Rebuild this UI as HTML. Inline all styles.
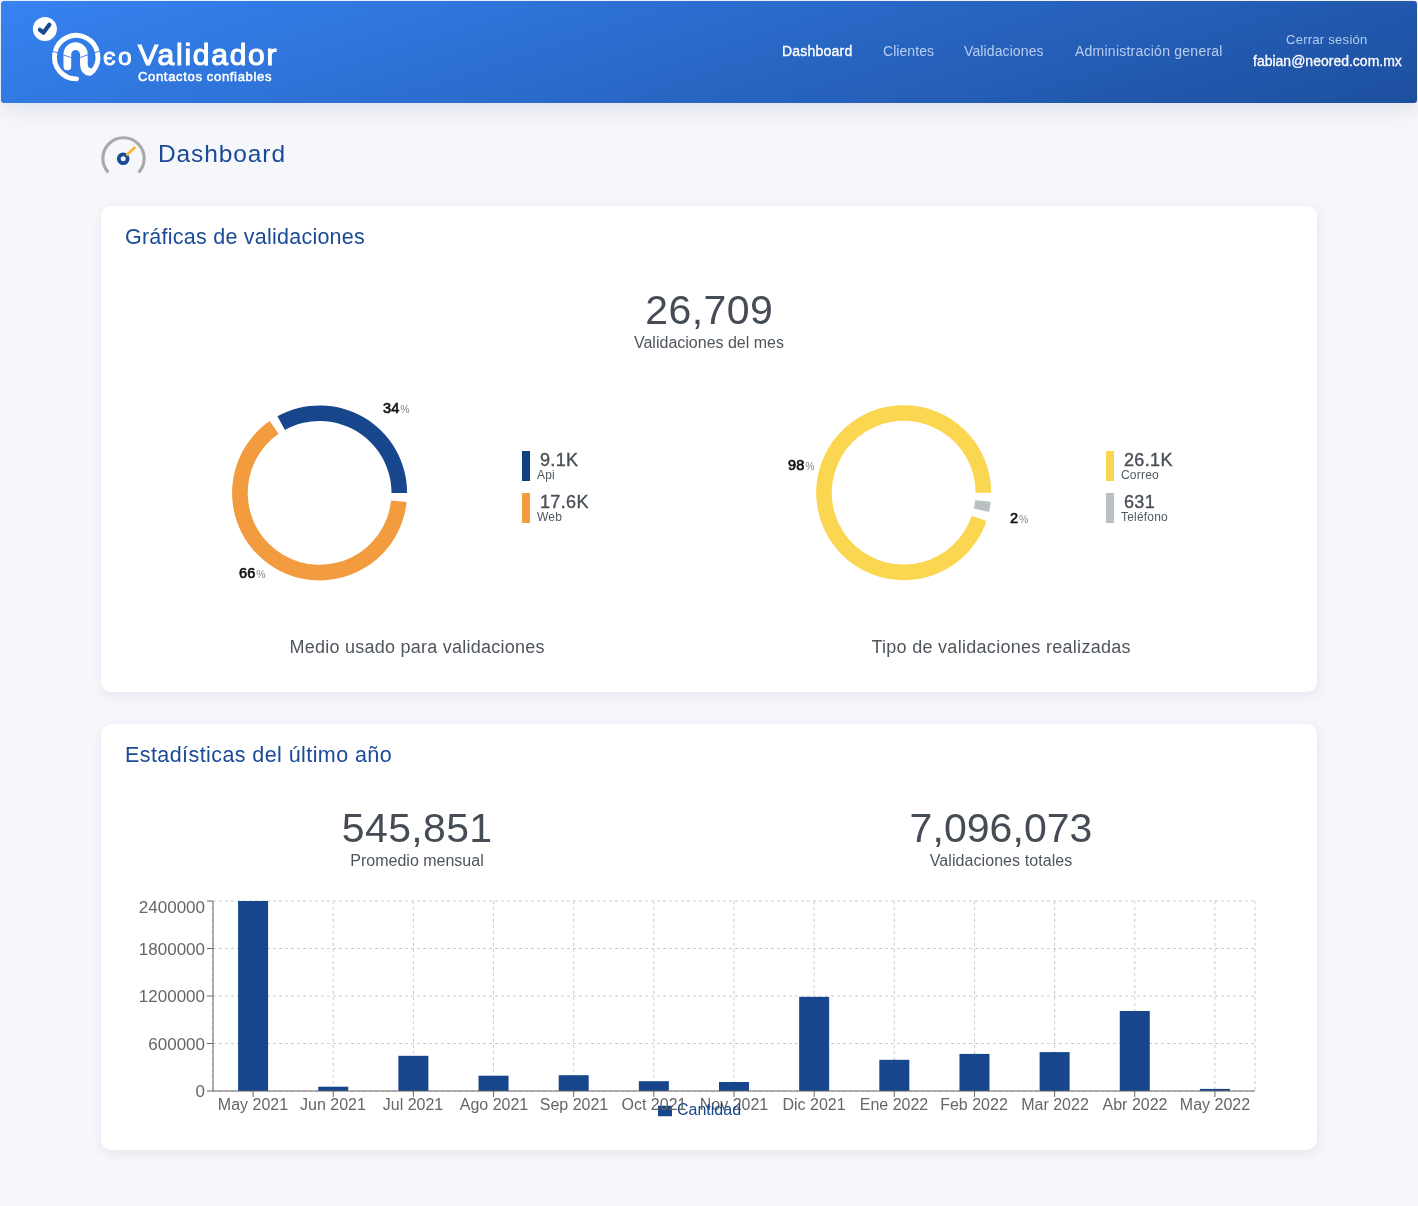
<!DOCTYPE html>
<html><head><meta charset="utf-8">
<style>
*{margin:0;padding:0;box-sizing:border-box}
html,body{width:1418px;height:1206px;overflow:hidden;background:#f6f7fb;font-family:"Liberation Sans",sans-serif;position:relative}
.t{position:absolute;white-space:nowrap;will-change:transform}
.hdr{position:absolute;left:1px;top:1px;width:1416px;height:102px;border-radius:3px;background:linear-gradient(162deg,#3683f2 0%,#1d4f9e 100%);box-shadow:0 5px 22px rgba(30,40,80,0.11)}
.card{position:absolute;left:101px;width:1216px;background:#fff;border-radius:10px;box-shadow:1px 3px 12px rgba(40,50,90,0.09)}
svg{position:absolute;left:0;top:0}
</style></head><body>
<div class="hdr"></div>
<div class="card" style="top:206px;height:486px"></div>
<div class="card" style="top:724px;height:426px"></div>
<svg width="1418" height="1206" viewBox="0 0 1418 1206">
<circle cx="44.9" cy="28.9" r="12" fill="#fff"/>
<path d="M39.9,29.8 L43.5,32.6 L49.3,24.7" fill="none" stroke="#1a4a8a" stroke-width="4.2" stroke-linecap="round" stroke-linejoin="round"/>
<path d="M76.58,78.85 A21.75,21.75 0 1 1 92.86,71.08" fill="none" stroke="#fff" stroke-width="4.9" stroke-linecap="round"/>
<path d="M67.35,66.5 L67.35,54.3 A8.25,8.25 0 0 1 83.85,54.3 L83.85,64 Q84.2,71.3 89.5,71.8" fill="none" stroke="#fff" stroke-width="7.7" stroke-linecap="round" stroke-linejoin="round"/>
<line x1="51.5" y1="51.2" x2="58.3" y2="52.9" stroke="#3279e6" stroke-width="0.9"/>
<line x1="63.3" y1="54.9" x2="71.5" y2="57.8" stroke="#3279e6" stroke-width="0.9"/>
<line x1="79.9" y1="57.5" x2="88.1" y2="54.8" stroke="#3279e6" stroke-width="0.9"/>
<line x1="93.8" y1="52.9" x2="100.6" y2="50.9" stroke="#3279e6" stroke-width="0.9"/>
<path d="M108.40,172.48 A20.65,20.65 0 1 1 138.60,172.48" fill="none" stroke="#a9a9a9" stroke-width="3.1"/>
<circle cx="123.2" cy="158.7" r="4.4" fill="none" stroke="#1a4a96" stroke-width="3.8"/>
<line x1="127.4" y1="154.6" x2="134.4" y2="147.8" stroke="#f5b73a" stroke-width="2.8" stroke-linecap="round"/>
<path d="M407.10,492.90 A87.5,87.5 0 0 0 277.44,416.23 L284.95,429.90 A71.9,71.9 0 0 1 391.50,492.90 Z" fill="#17468c"/>
<path d="M269.65,421.06 A87.5,87.5 0 1 0 406.62,502.05 L391.11,500.42 A71.9,71.9 0 1 1 278.56,433.86 Z" fill="#f29b3f"/>
<path d="M991.20,492.70 A87.5,87.5 0 1 0 986.54,520.88 L971.77,515.85 A71.9,71.9 0 1 1 975.60,492.70 Z" fill="#fbd651"/>
<path d="M989.03,512.06 A87.5,87.5 0 0 0 990.72,501.85 L975.21,500.22 A71.9,71.9 0 0 1 973.82,508.61 Z" fill="#b9c0c2"/>
<g stroke="#cccccc" stroke-width="1" stroke-dasharray="3 3"><line x1="213" y1="1091.00" x2="1255" y2="1091.00"/><line x1="213" y1="1043.50" x2="1255" y2="1043.50"/><line x1="213" y1="996.00" x2="1255" y2="996.00"/><line x1="213" y1="948.50" x2="1255" y2="948.50"/><line x1="213" y1="901.00" x2="1255" y2="901.00"/><line x1="253.08" y1="901" x2="253.08" y2="1091"/><line x1="333.23" y1="901" x2="333.23" y2="1091"/><line x1="413.38" y1="901" x2="413.38" y2="1091"/><line x1="493.54" y1="901" x2="493.54" y2="1091"/><line x1="573.69" y1="901" x2="573.69" y2="1091"/><line x1="653.85" y1="901" x2="653.85" y2="1091"/><line x1="734.00" y1="901" x2="734.00" y2="1091"/><line x1="814.15" y1="901" x2="814.15" y2="1091"/><line x1="894.31" y1="901" x2="894.31" y2="1091"/><line x1="974.46" y1="901" x2="974.46" y2="1091"/><line x1="1054.62" y1="901" x2="1054.62" y2="1091"/><line x1="1134.77" y1="901" x2="1134.77" y2="1091"/><line x1="1214.92" y1="901" x2="1214.92" y2="1091"/><line x1="213.00" y1="901" x2="213.00" y2="1091"/><line x1="1255.00" y1="901" x2="1255.00" y2="1091"/></g>
<rect x="238.08" y="901.00" width="30" height="190.00" fill="#17468c"/>
<rect x="318.23" y="1086.70" width="30" height="4.30" fill="#17468c"/>
<rect x="398.38" y="1055.80" width="30" height="35.20" fill="#17468c"/>
<rect x="478.54" y="1075.70" width="30" height="15.30" fill="#17468c"/>
<rect x="558.69" y="1075.20" width="30" height="15.80" fill="#17468c"/>
<rect x="638.85" y="1081.20" width="30" height="9.80" fill="#17468c"/>
<rect x="719.00" y="1082.00" width="30" height="9.00" fill="#17468c"/>
<rect x="799.15" y="996.85" width="30" height="94.15" fill="#17468c"/>
<rect x="879.31" y="1059.80" width="30" height="31.20" fill="#17468c"/>
<rect x="959.46" y="1053.90" width="30" height="37.10" fill="#17468c"/>
<rect x="1039.62" y="1052.10" width="30" height="38.90" fill="#17468c"/>
<rect x="1119.77" y="1011.00" width="30" height="80.00" fill="#17468c"/>
<rect x="1199.92" y="1088.90" width="30" height="2.10" fill="#17468c"/>
<g stroke="#666" stroke-width="1" fill="none"><line x1="213" y1="901" x2="213" y2="1091"/><line x1="213" y1="1091" x2="1255" y2="1091"/>
<line x1="207" y1="1091.00" x2="213" y2="1091.00"/>
<line x1="207" y1="1043.50" x2="213" y2="1043.50"/>
<line x1="207" y1="996.00" x2="213" y2="996.00"/>
<line x1="207" y1="948.50" x2="213" y2="948.50"/>
<line x1="207" y1="901.00" x2="213" y2="901.00"/>
<line x1="253.08" y1="1091" x2="253.08" y2="1097"/>
<line x1="333.23" y1="1091" x2="333.23" y2="1097"/>
<line x1="413.38" y1="1091" x2="413.38" y2="1097"/>
<line x1="493.54" y1="1091" x2="493.54" y2="1097"/>
<line x1="573.69" y1="1091" x2="573.69" y2="1097"/>
<line x1="653.85" y1="1091" x2="653.85" y2="1097"/>
<line x1="734.00" y1="1091" x2="734.00" y2="1097"/>
<line x1="814.15" y1="1091" x2="814.15" y2="1097"/>
<line x1="894.31" y1="1091" x2="894.31" y2="1097"/>
<line x1="974.46" y1="1091" x2="974.46" y2="1097"/>
<line x1="1054.62" y1="1091" x2="1054.62" y2="1097"/>
<line x1="1134.77" y1="1091" x2="1134.77" y2="1097"/>
<line x1="1214.92" y1="1091" x2="1214.92" y2="1097"/>
</g>
<rect x="658" y="1105.75" width="14" height="10.5" fill="#17468c"/>
</svg>
<div class="t" style="top:44.15px;font-size:14px;line-height:14px;color:#ffffff;letter-spacing:0.220px;left:781.70px;-webkit-text-stroke:0.35px #fff;">Dashboard</div>
<div class="t" style="top:44.15px;font-size:14px;line-height:14px;color:#b9cdf0;letter-spacing:0.060px;left:882.70px;">Clientes</div>
<div class="t" style="top:44.15px;font-size:14px;line-height:14px;color:#b9cdf0;letter-spacing:0.110px;left:964.20px;">Validaciones</div>
<div class="t" style="top:44.15px;font-size:14px;line-height:14px;color:#b9cdf0;letter-spacing:0.240px;left:1074.80px;">Administración general</div>
<div class="t" style="top:33.29px;font-size:13px;line-height:13px;color:#b9cdf0;letter-spacing:0.270px;left:1286.40px;">Cerrar sesión</div>
<div class="t" style="top:54.15px;font-size:14px;line-height:14px;color:#ffffff;left:1252.60px;-webkit-text-stroke:0.3px #fff;">fabian@neored.com.mx</div>
<div class="t" style="top:40.20px;font-size:30px;line-height:30px;color:#ffffff;letter-spacing:1.750px;left:138.20px;-webkit-text-stroke:1.1px #fff;">Validador</div>
<div class="t" style="top:70.09px;font-size:13px;line-height:13px;color:#ffffff;letter-spacing:0.670px;left:138.30px;-webkit-text-stroke:0.5px #fff;">Contactos confiables</div>
<div class="t" style="top:142.36px;font-size:24.5px;line-height:24.5px;color:#1a4a96;letter-spacing:0.900px;left:157.80px;">Dashboard</div>
<div class="t" style="top:226.90px;font-size:21.5px;line-height:21.5px;color:#1a4a96;letter-spacing:0.240px;left:125.40px;">Gráficas de validaciones</div>
<div class="t" style="top:745.00px;font-size:21.5px;line-height:21.5px;color:#1a4a96;letter-spacing:0.420px;left:124.70px;">Estadísticas del último año</div>
<div class="t" style="top:290.39px;font-size:41px;line-height:41px;color:#454c55;letter-spacing:0.400px;left:409.40px;width:600px;text-align:center;text-indent:0.400px;">26,709</div>
<div class="t" style="top:334.55px;font-size:16px;line-height:16px;color:#4e555d;left:409.00px;width:600px;text-align:center;">Validaciones del mes</div>
<div class="t" style="top:808.19px;font-size:41px;line-height:41px;color:#454c55;letter-spacing:0.350px;left:117.00px;width:600px;text-align:center;text-indent:0.350px;">545,851</div>
<div class="t" style="top:852.75px;font-size:16px;line-height:16px;color:#4e555d;left:117.30px;width:600px;text-align:center;">Promedio mensual</div>
<div class="t" style="top:807.89px;font-size:41px;line-height:41px;color:#454c55;letter-spacing:0.050px;left:700.90px;width:600px;text-align:center;text-indent:0.050px;">7,096,073</div>
<div class="t" style="top:852.55px;font-size:16px;line-height:16px;color:#4e555d;letter-spacing:0.070px;left:700.80px;width:600px;text-align:center;text-indent:0.070px;">Validaciones totales</div>
<div class="t" style="top:638.36px;font-size:18px;line-height:18px;color:#4e555d;letter-spacing:0.250px;left:117.00px;width:600px;text-align:center;text-indent:0.250px;">Medio usado para validaciones</div>
<div class="t" style="top:638.36px;font-size:18px;line-height:18px;color:#4e555d;letter-spacing:0.290px;left:700.50px;width:600px;text-align:center;text-indent:0.290px;">Tipo de validaciones realizadas</div>
<div class="t" style="left:382.70px;top:401.02px;font-size:14.5px;line-height:14.5px;color:#111;-webkit-text-stroke:0.65px #111;letter-spacing:0.3px">34<span style="font-size:10.5px;margin-left:0.5px;-webkit-text-stroke:0;letter-spacing:0;position:relative;top:-0.5px;font-weight:normal;color:#888;">%</span></div>
<div class="t" style="left:238.70px;top:565.92px;font-size:14.5px;line-height:14.5px;color:#111;-webkit-text-stroke:0.65px #111;letter-spacing:0.3px">66<span style="font-size:10.5px;margin-left:0.5px;-webkit-text-stroke:0;letter-spacing:0;position:relative;top:-0.5px;font-weight:normal;color:#888;">%</span></div>
<div class="t" style="left:787.60px;top:457.82px;font-size:14.5px;line-height:14.5px;color:#111;-webkit-text-stroke:0.65px #111;letter-spacing:0.3px">98<span style="font-size:10.5px;margin-left:0.5px;-webkit-text-stroke:0;letter-spacing:0;position:relative;top:-0.5px;font-weight:normal;color:#888;">%</span></div>
<div class="t" style="left:1009.50px;top:510.52px;font-size:14.5px;line-height:14.5px;color:#111;-webkit-text-stroke:0.65px #111;letter-spacing:0.3px">2<span style="font-size:10.5px;margin-left:0.5px;-webkit-text-stroke:0;letter-spacing:0;position:relative;top:-0.5px;font-weight:normal;color:#888;">%</span></div>
<div style="position:absolute;left:522px;top:451px;width:8px;height:30px;background:#123f80;"></div>
<div class="t" style="top:451.16px;font-size:18px;line-height:18px;color:#4a5058;letter-spacing:0.350px;left:539.80px;-webkit-text-stroke:0.4px #4a5058;">9.1K</div>
<div class="t" style="top:468.94px;font-size:12px;line-height:12px;color:#50575f;letter-spacing:0.200px;left:536.80px;">Api</div>
<div style="position:absolute;left:522px;top:493px;width:8px;height:30px;background:#f29b3f;"></div>
<div class="t" style="top:492.66px;font-size:18px;line-height:18px;color:#4a5058;letter-spacing:0.350px;left:539.80px;-webkit-text-stroke:0.4px #4a5058;">17.6K</div>
<div class="t" style="top:511.04px;font-size:12px;line-height:12px;color:#50575f;letter-spacing:0.200px;left:536.80px;">Web</div>
<div style="position:absolute;left:1106px;top:451px;width:8px;height:30px;background:#fbd651;"></div>
<div class="t" style="top:451.06px;font-size:18px;line-height:18px;color:#4a5058;letter-spacing:0.350px;left:1124.20px;-webkit-text-stroke:0.4px #4a5058;">26.1K</div>
<div class="t" style="top:468.84px;font-size:12px;line-height:12px;color:#50575f;letter-spacing:0.200px;left:1120.80px;">Correo</div>
<div style="position:absolute;left:1106px;top:493px;width:8px;height:30px;background:#b8c0c3;"></div>
<div class="t" style="top:493.26px;font-size:18px;line-height:18px;color:#4a5058;letter-spacing:0.350px;left:1124.00px;-webkit-text-stroke:0.4px #4a5058;">631</div>
<div class="t" style="top:511.34px;font-size:12px;line-height:12px;color:#50575f;letter-spacing:0.200px;left:1120.80px;">Teléfono</div>
<div class="t" style="top:1083.21px;font-size:17px;line-height:17px;color:#666666;left:105.00px;width:100px;text-align:right;">0</div>
<div class="t" style="top:1035.71px;font-size:17px;line-height:17px;color:#666666;left:105.00px;width:100px;text-align:right;">600000</div>
<div class="t" style="top:988.21px;font-size:17px;line-height:17px;color:#666666;left:105.00px;width:100px;text-align:right;">1200000</div>
<div class="t" style="top:940.71px;font-size:17px;line-height:17px;color:#666666;left:105.00px;width:100px;text-align:right;">1800000</div>
<div class="t" style="top:899.21px;font-size:17px;line-height:17px;color:#666666;left:105.00px;width:100px;text-align:right;">2400000</div>
<div class="t" style="top:1096.65px;font-size:16px;line-height:16px;color:#666666;left:193.08px;width:120px;text-align:center;">May 2021</div>
<div class="t" style="top:1096.65px;font-size:16px;line-height:16px;color:#666666;left:273.23px;width:120px;text-align:center;">Jun 2021</div>
<div class="t" style="top:1096.65px;font-size:16px;line-height:16px;color:#666666;left:353.38px;width:120px;text-align:center;">Jul 2021</div>
<div class="t" style="top:1096.65px;font-size:16px;line-height:16px;color:#666666;left:433.54px;width:120px;text-align:center;">Ago 2021</div>
<div class="t" style="top:1096.65px;font-size:16px;line-height:16px;color:#666666;left:513.69px;width:120px;text-align:center;">Sep 2021</div>
<div class="t" style="top:1096.65px;font-size:16px;line-height:16px;color:#666666;left:593.85px;width:120px;text-align:center;">Oct 2021</div>
<div class="t" style="top:1096.65px;font-size:16px;line-height:16px;color:#666666;left:674.00px;width:120px;text-align:center;">Nov 2021</div>
<div class="t" style="top:1096.65px;font-size:16px;line-height:16px;color:#666666;left:754.15px;width:120px;text-align:center;">Dic 2021</div>
<div class="t" style="top:1096.65px;font-size:16px;line-height:16px;color:#666666;left:834.31px;width:120px;text-align:center;">Ene 2022</div>
<div class="t" style="top:1096.65px;font-size:16px;line-height:16px;color:#666666;left:914.46px;width:120px;text-align:center;">Feb 2022</div>
<div class="t" style="top:1096.65px;font-size:16px;line-height:16px;color:#666666;left:994.62px;width:120px;text-align:center;">Mar 2022</div>
<div class="t" style="top:1096.65px;font-size:16px;line-height:16px;color:#666666;left:1074.77px;width:120px;text-align:center;">Abr 2022</div>
<div class="t" style="top:1096.65px;font-size:16px;line-height:16px;color:#666666;left:1154.92px;width:120px;text-align:center;">May 2022</div>
<div class="t" style="top:1102.45px;font-size:16px;line-height:16px;color:#17468c;left:676.70px;">Cantidad</div>
<div class="t" style="top:44.86px;font-size:24.5px;line-height:24.5px;color:#ffffff;letter-spacing:2.400px;left:102.60px;-webkit-text-stroke:0.9px #fff;">єo</div>
</body></html>
